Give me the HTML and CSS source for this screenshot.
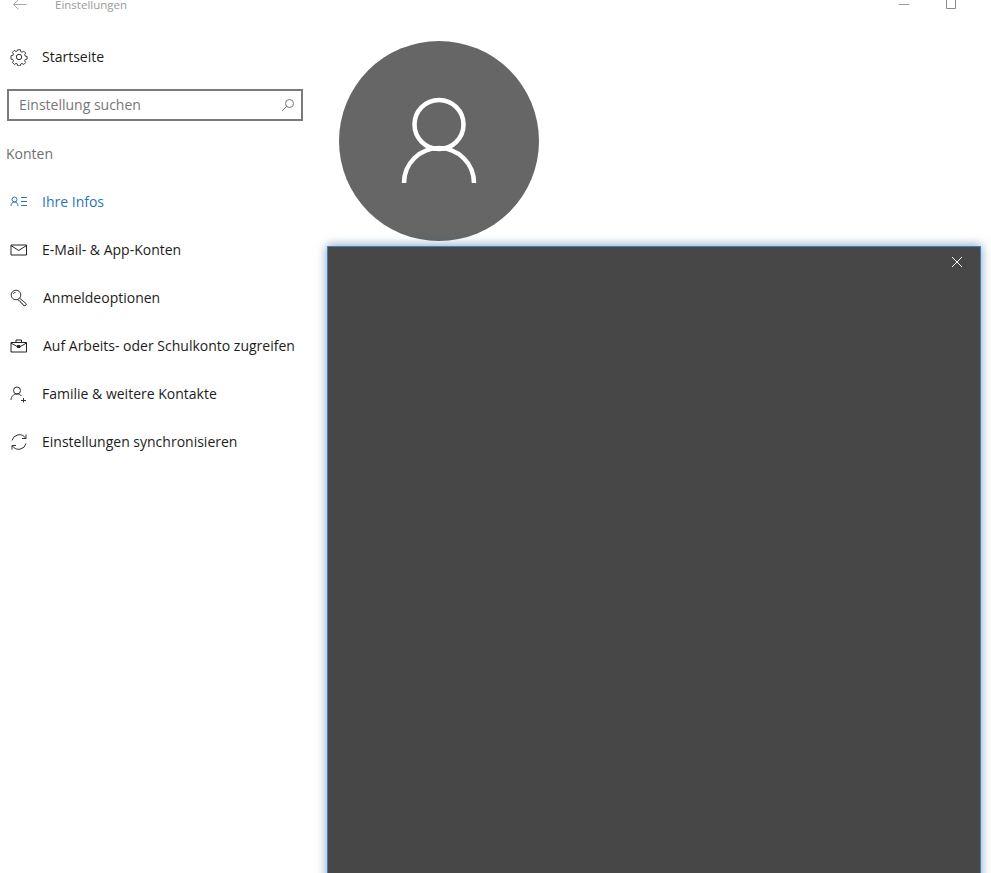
FILE: index.html
```html
<!DOCTYPE html>
<html lang="de">
<head>
<meta charset="utf-8">
<title>Einstellungen</title>
<link rel="stylesheet" href="styles.css">
</head>
<body>
<div class="app">
  <header class="titlebar">
    <svg class="back" width="16" height="12" viewBox="0 0 16 12"><path d="M14.500 5.500H1.500M6.500 .5l-5 5 5 5" fill="none" stroke="#a8a8a8"/></svg>
    <span class="apptitle">Einstellungen</span>
    <span class="winbtns">
      <svg width="12" height="12" viewBox="0 0 12 12"><path d="M0 5.500h10" stroke="#9a9a9a"/></svg>
      <svg width="12" height="12" viewBox="0 0 12 12"><path d="M1.500 .5h9v9h-9z" fill="none" stroke="#8a8a8a"/></svg>
    </span>
  </header>
  <div class="columns">
    <aside class="sidebar">
      <a class="home">
        <svg class="icon" width="18" height="18" viewBox="0 0 18 18"><g fill="none" stroke="#333" stroke-width="1"><circle cx="9" cy="9" r="2.700"/><path d="M7.600 1.300h2.800l.4 2 1.400.6 1.800-1.100 2 2-1.100 1.800.6 1.400 2 .4v2.800l-2 .4-.6 1.400 1.100 1.800-2 2-1.800-1.100-1.400.6-.4 2H7.600l-.4-2-1.400-.6-1.800 1.100-2-2 1.100-1.800-.6-1.400-2-.4V7.600l2-.4.6-1.400-1.100-1.800 2-2 1.800 1.100 1.400-.6z" transform="translate(.5 .5) scale(.95)"/></g></svg>
        <span>Startseite</span>
      </a>
      <div class="search">
        <span>Einstellung suchen</span>
        <svg width="14" height="14" viewBox="0 0 14 14"><circle cx="8.500" cy="5.500" r="4" fill="none" stroke="#777"/><path d="M5.500 8.500l-4.500 4.500" stroke="#777"/></svg>
      </div>
      <div class="section">Konten</div>
      <nav class="nav">
        <a class="item active">
          <svg class="icon" width="18" height="12" viewBox="0 0 18 12"><g fill="none" stroke="#2b74bd"><circle cx="4.500" cy="3.500" r="2.500"/><path d="M1 10c0-2.500 1.500-4 3.500-4s3.500 1.500 3.500 4M11 1.500h6M11 5.500h6M11 9.500h6"/></g></svg>
          <span>Ihre Infos</span>
        </a>
        <a class="item">
          <svg class="icon" width="18" height="12" viewBox="0 0 18 12"><path d="M1 1h15.500v10H1zM1 1.500l7.750 5 7.750-5" fill="none" stroke="#222"/></svg>
          <span>E-Mail- &amp; App-Konten</span>
        </a>
        <a class="item shifted">
          <svg class="icon" width="18" height="18" viewBox="0 0 18 18"><g fill="none" stroke="#333"><circle cx="6" cy="6" r="4.800"/><path d="M9.500 9l7 6-1.500 2-2-1-.5-1.500-1.500-.5-.5-1.500-2.500-1.500M3.500 5a1.500 1.500 0 0 1 2-1.500"/></g></svg>
          <span>Anmeldeoptionen</span>
        </a>
        <a class="item shifted">
          <svg class="icon" width="18" height="14" viewBox="0 0 18 14"><g fill="none" stroke="#222"><path d="M1 3.500h15.500v9.500H1zM6 3.500V1h5.500v2.500M1 4l6 3.500h3.500l6-3.500"/><path d="M7.500 6.500h2.500v2H7.500z" fill="#222"/></g></svg>
          <span>Auf Arbeits- oder Schulkonto zugreifen</span>
        </a>
        <a class="item">
          <svg class="icon" width="18" height="17" viewBox="0 0 18 17"><g fill="none" stroke="#333"><circle cx="7" cy="4.500" r="3.500"/><path d="M1 14c0-3.500 2.500-6 6-6 2 0 3.500.7 4.500 2M13.500 12v4.500M11 14.500h5"/></g></svg>
          <span>Familie &amp; weitere Kontakte</span>
        </a>
        <a class="item">
          <svg class="icon" width="18" height="18" viewBox="0 0 18 18"><g fill="none" stroke="#333"><path d="M2 7.500A7.500 7.500 0 0 1 15.500 5M16 10.500A7.500 7.500 0 0 1 2.500 13"/><path d="M16 1.500V5.500h-4M2 16.500v-4h4"/></g></svg>
          <span>Einstellungen synchronisieren</span>
        </a>
      </nav>
    </aside>
    <main class="content">
      <div class="avatar">
        <svg width="78" height="90" viewBox="0 0 78 90"><g fill="none" stroke="#fff" stroke-width="4.500"><circle cx="39" cy="29.500" r="24.500"/><path d="M4 88a35 35 0 0 1 70 0"/></g></svg>
      </div>
    </main>
  </div>
</div>
<section class="dialog">
  <svg class="close" width="12" height="12" viewBox="0 0 12 12"><path d="M1 1l10 10M11 1L1 11" stroke="#fff"/></svg>
</section>
</body>
</html>
```

FILE: styles.css
```css
html, body {
  margin: 0;
  height: 100%;
  overflow: hidden;
  background: #fff;
}
body {
  font-family: "Open Sans", "Noto Sans", sans-serif;
  font-size: 14px;
  color: #1c1c1c;
}
.titlebar {
  display: flex;
  align-items: center;
  height: 10px;
  padding-left: 12px;
  padding-right: 34px;
}
.back { flex: none; }
.apptitle {
  margin-left: 27px;
  font-size: 11.500px;
  color: #9a9a9a;
  margin-top: -1px;
  line-height: 10px;
}
.winbtns {
  margin-left: auto;
  display: flex;
  gap: 34px;
  margin-top: -1px;
}
.columns { display: flex; }
.sidebar {
  width: 320px;
  flex: none;
  padding-top: 31px;
}
.home {
  display: flex;
  align-items: center;
  gap: 14px;
  height: 32px;
  padding-left: 10px;
}
.icon { flex: none; }
.home span, .item span { margin-top: -2px; }
.search {
  display: flex;
  align-items: center;
  justify-content: space-between;
  box-sizing: border-box;
  width: 296px;
  height: 32px;
  margin: 16px 0 0 7px;
  padding: 0 6px 0 10px;
  border: 2px solid #7a7a7a;
  color: #777;
}
.search span { margin-top: -2px; }
.section {
  margin: 21px 0 0 6px;
  height: 24px;
  line-height: 24px;
  color: #707070;
}
.nav {
  display: flex;
  flex-direction: column;
  margin-top: 12px;
}
.item {
  display: flex;
  align-items: center;
  gap: 14px;
  height: 48px;
  padding-left: 10px;
  white-space: nowrap;
}
.item.shifted { gap: 15px; }
.item.active { color: #2b74bd; }
.content { flex: 1; padding: 31px 0 0 19px; }
.avatar {
  display: flex;
  align-items: center;
  justify-content: center;
  width: 200px;
  height: 200px;
  border-radius: 50%;
  background: #666;
}
.avatar svg { margin-top: -2px; }
.dialog {
  position: absolute;
  left: 327px;
  top: 246px;
  right: 10px;
  bottom: -20px;
  background: #474747;
  border: 1px solid #3f80bb;
  box-shadow: 0 0 10px rgba(50, 110, 180, .5), 0 -2px 8px rgba(0, 0, 0, .12);
}
.close {
  position: absolute;
  right: 17px;
  top: 9px;
}
```
